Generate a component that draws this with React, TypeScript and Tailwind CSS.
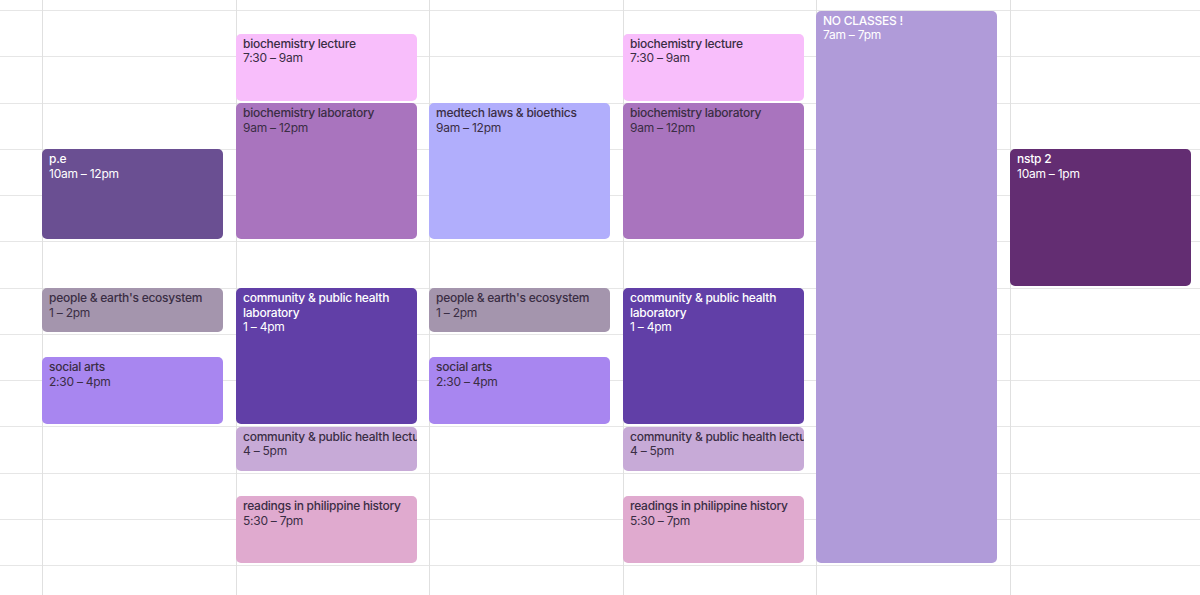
const HOUR = 46.25

type CalEvent = {
  title: string
  time: string
  start: number // hours since 7am
  end: number
  bg: string
  light?: boolean
}

const bioLecture: CalEvent = { title: "biochemistry lecture", time: "7:30 – 9am", start: 0.5, end: 2, bg: "bg-[#f8befb]" }
const bioLab: CalEvent = { title: "biochemistry laboratory", time: "9am – 12pm", start: 2, end: 5, bg: "bg-[#a974be]" }
const commLab: CalEvent = { title: "community & public health laboratory", time: "1 – 4pm", start: 6, end: 9, bg: "bg-[#613fa7]", light: true }
const commLec: CalEvent = { title: "community & public health lecture", time: "4 – 5pm", start: 9, end: 10, bg: "bg-[#c7aad7]" }
const readings: CalEvent = { title: "readings in philippine history", time: "5:30 – 7pm", start: 10.5, end: 12, bg: "bg-[#e0aacf]" }
const people: CalEvent = { title: "people & earth's ecosystem", time: "1 – 2pm", start: 6, end: 7, bg: "bg-[#a495ad]" }
const socialArts: CalEvent = { title: "social arts", time: "2:30 – 4pm", start: 7.5, end: 9, bg: "bg-[#a886f0]" }

const days: { width: string; events: CalEvent[] }[] = [
  {
    width: "w-[194px]",
    events: [
      { title: "p.e", time: "10am – 12pm", start: 3, end: 5, bg: "bg-[#6a4f92]", light: true },
      people,
      socialArts,
    ],
  },
  { width: "w-[193px]", events: [bioLecture, bioLab, commLab, commLec, readings] },
  {
    width: "w-[194px]",
    events: [
      { title: "medtech laws & bioethics", time: "9am – 12pm", start: 2, end: 5, bg: "bg-[#b1aefc]" },
      people,
      socialArts,
    ],
  },
  { width: "w-[193px]", events: [bioLecture, bioLab, commLab, commLec, readings] },
  {
    width: "w-[194px]",
    events: [{ title: "NO CLASSES !", time: "7am – 7pm", start: 0, end: 12, bg: "bg-[#b09bd9]", light: true }],
  },
  {
    width: "w-[194px]",
    events: [{ title: "nstp 2", time: "10am – 1pm", start: 3, end: 6, bg: "bg-[#632d72]", light: true }],
  },
]

function HourLines() {
  return (
    <div className="flex flex-col pt-[10px]">
      {Array.from({ length: 13 }).map((_, i) => (
        <div key={i} className="h-[46.25px] shrink-0 border-t border-[#e6e6e6]" />
      ))}
    </div>
  )
}

function EventCard({ ev }: { ev: CalEvent }) {
  const top = 10 + ev.start * HOUR + 0.5
  const height = (ev.end - ev.start) * HOUR - 2.5
  const long = ev.end - ev.start > 1.5
  return (
    <div
      className={`absolute left-[-1px] w-[181px] overflow-hidden rounded-[5px] pl-[7px] pt-[3px] text-[12px] leading-[14.5px] tracking-[-0.25px] ${ev.bg} ${
        ev.light ? "text-white" : "text-[#3a2d44]"
      }`}
      style={{ top, height }}
    >
      <div className={`font-medium ${long ? "pr-2" : "whitespace-nowrap"}`}>{ev.title}</div>
      <div>{ev.time}</div>
    </div>
  )
}

export default function App() {
  return (
    <div className="flex h-[595px] w-[1200px] overflow-hidden bg-white font-['Inter','Roboto','Liberation_Sans',sans-serif]">
      <div className="w-[42px] shrink-0">
        <HourLines />
      </div>
      {days.map((d, i) => (
        <div key={i} className={`relative shrink-0 border-l border-[#e0e0e0] ${d.width}`}>
          <HourLines />
          {d.events.map((ev, j) => (
            <EventCard key={j} ev={ev} />
          ))}
        </div>
      ))}
    </div>
  )
}
